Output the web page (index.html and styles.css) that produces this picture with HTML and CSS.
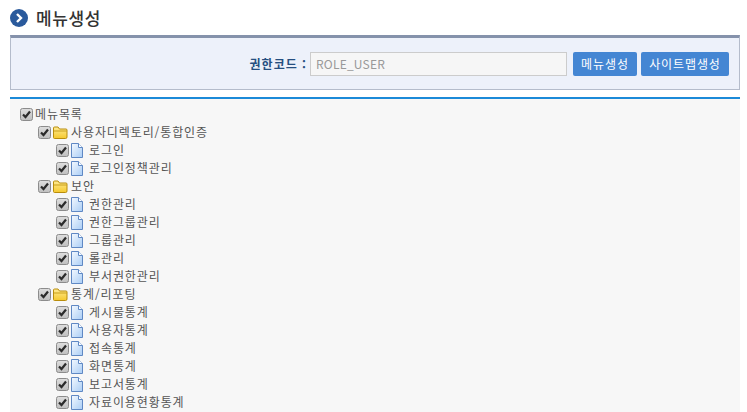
FILE: index.html
```html
<!DOCTYPE html>
<html lang="ko">
<head>
  <meta charset="UTF-8">
  <title>메뉴생성</title>
  <link rel="stylesheet" href="styles.css">
</head>
<body>
<div class="container">
  <h1 class="page-title">
    <span class="title-icon">
      <svg width="18" height="18" viewBox="0 0 18 18"><circle cx="9" cy="9" r="9" fill="#2a5a9c"/><path d="M7 5l4 4-4 4" fill="none" stroke="#fff" stroke-width="2.4"/></svg>
    </span>
    메뉴생성
  </h1>

  <form class="search-box">
    <label class="code-label" for="roleCode">권한코드 :</label>
    <input type="text" id="roleCode" class="code-input" value="ROLE_USER" disabled>
    <button type="button" class="blue-button menu-button">메뉴생성</button>
    <button type="button" class="blue-button sitemap-button">사이트맵생성</button>
  </form>

  <div class="tree" id="tree"></div>
</div>

<svg width="0" height="0" class="defs">
  <defs>
    <linearGradient id="folderFill" x1="0" y1="0" x2="0" y2="1">
      <stop offset="0" stop-color="#ffeb94"/>
      <stop offset="1" stop-color="#f5c92e"/>
    </linearGradient>
    <linearGradient id="pageFill" x1="0" y1="0" x2="1" y2="1">
      <stop offset="0" stop-color="#f4f9ff"/>
      <stop offset="1" stop-color="#a9cdf5"/>
    </linearGradient>
    <linearGradient id="checkFill" x1="0" y1="0" x2="0" y2="1">
      <stop offset="0" stop-color="#dedede"/>
      <stop offset="1" stop-color="#bfbfbf"/>
    </linearGradient>
  </defs>
  <symbol id="folder" viewBox="0 0 15 13">
    <path d="M.5 2q0-1 1-1h3.500l1.500 2h6.500q1 0 1 1v7q0 1.500-1.500 1.500h-11q-1 0-1-1z" fill="url(#folderFill)" stroke="#b98d0c"/>
    <path d="M1 5h13" stroke="#c99f1c"/>
  </symbol>
  <symbol id="page" viewBox="0 0 12 15">
    <path d="M.5.500h7l4 4v10h-11z" fill="url(#pageFill)" stroke="#5f88c4"/>
    <path d="M7.500.5v4h4" fill="#fff" stroke="#5f88c4"/>
  </symbol>
  <symbol id="check" viewBox="0 0 13 13">
    <rect x=".5" y=".5" width="12" height="12" rx="2" fill="url(#checkFill)" stroke="#8c8c8c"/>
    <path d="M3 6.500l2.500 2.500 4.500-5.500" fill="none" stroke="#2b2b2b" stroke-width="2.200"/>
  </symbol>
</svg>

<script>
var menu = [
  { name: '메뉴목록', level: 0 },
  { name: '사용자디렉토리/통합인증', level: 1 },
  { name: '로그인', level: 2 },
  { name: '로그인정책관리', level: 2 },
  { name: '보안', level: 1 },
  { name: '권한관리', level: 2 },
  { name: '권한그룹관리', level: 2 },
  { name: '그룹관리', level: 2 },
  { name: '롤관리', level: 2 },
  { name: '부서권한관리', level: 2 },
  { name: '통계/리포팅', level: 1 },
  { name: '게시물통계', level: 2 },
  { name: '사용자통계', level: 2 },
  { name: '접속통계', level: 2 },
  { name: '화면통계', level: 2 },
  { name: '보고서통계', level: 2 },
  { name: '자료이용현황통계', level: 2 }
];

var output = '';
for (var i = 0; i < menu.length; i++) {
  var item = menu[i];
  output += '<div class="row level' + item.level + '">';
  output += '<svg class="check"><use href="#check"/></svg>';
  if (item.level == 1) output += '<svg class="folder"><use href="#folder"/></svg>';
  if (item.level == 2) output += '<svg class="page"><use href="#page"/></svg>';
  output += '<span>' + item.name + '</span></div>';
}
document.getElementById('tree').innerHTML = output;
</script>
</body>
</html>
```

FILE: styles.css
```css
html, body {
  height: 100%;
  overflow: hidden;
}

body {
  margin: 0;
  padding: 0;
  font-family: "Noto Sans CJK KR", "Liberation Sans", sans-serif;
  font-size: 12px;
  color: #555;
  background-color: #fff;
}

.container {
  margin: 0 7px 0 10px;
}

.defs {
  position: absolute;
}

.page-title {
  display: flex;
  align-items: center;
  gap: 8px;
  height: 35px;
  margin: 0;
  font-size: 17px;
  font-weight: 500;
  letter-spacing: 0.6px;
  color: #333;
}

.title-icon {
  display: flex;
}

.search-box {
  display: flex;
  justify-content: flex-end;
  align-items: center;
  height: 51px;
  padding-right: 10px;
  background-color: #edf1fa;
  border: 1px solid #b4bccb;
  border-top: 3px solid #8592ab;
}

.code-label {
  margin-right: 3px;
  font-weight: 700;
  letter-spacing: 1px;
  color: #264f80;
}

.code-input {
  box-sizing: border-box;
  width: 257px;
  height: 24px;
  margin: 0 6px 0 0;
  padding: 0 5px;
  border: 1px solid #ccc;
  background-color: #f6f6f6;
  font-family: inherit;
  font-size: 12px;
  letter-spacing: 0.2px;
  color: #999;
}

.blue-button {
  height: 24px;
  padding: 0;
  border: none;
  border-radius: 2px;
  background-color: #4486d3;
  color: #fff;
  font-family: inherit;
  font-size: 12px;
  letter-spacing: 0.9px;
}

.menu-button {
  width: 64px;
}

.sitemap-button {
  width: 88px;
  margin-left: 4px;
}

.tree {
  margin-top: 7px;
  padding-top: 6px;
  height: 320px;
  border-top: 2px solid #1b8ad8;
  background-color: #f7f7f7;
}

.row {
  display: flex;
  align-items: center;
  height: 18px;
  line-height: 18px;
  letter-spacing: 0.9px;
  white-space: nowrap;
}

.row svg {
  flex: none;
}

.level0 {
  padding-left: 10px;
}

.level1 {
  padding-left: 28px;
}

.level2 {
  padding-left: 46px;
}

.check {
  width: 13px;
  height: 13px;
  margin-right: 2px;
}

.folder {
  width: 15px;
  height: 13px;
  margin-right: 3px;
}

.page {
  width: 12px;
  height: 15px;
  margin-right: 6px;
}
```
